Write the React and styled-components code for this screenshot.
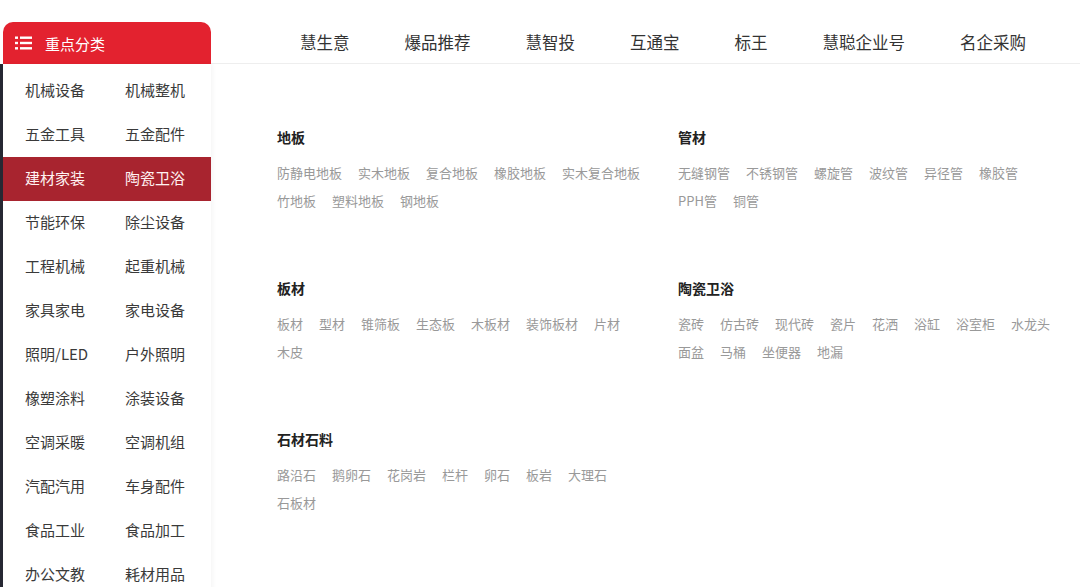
import React from "react";
import styled, { createGlobalStyle } from "styled-components";

const GlobalStyle = createGlobalStyle`
  body {
    margin: 0;
    background: #fff;
    font-family: "Noto Sans CJK SC", "Noto Sans", sans-serif;
  }
`;

const sideRows = [
  ["机械设备", "机械整机"],
  ["五金工具", "五金配件"],
  ["建材家装", "陶瓷卫浴"],
  ["节能环保", "除尘设备"],
  ["工程机械", "起重机械"],
  ["家具家电", "家电设备"],
  ["照明/LED", "户外照明"],
  ["橡塑涂料", "涂装设备"],
  ["空调采暖", "空调机组"],
  ["汽配汽用", "车身配件"],
  ["食品工业", "食品加工"],
  ["办公文教", "耗材用品"],
];

const navItems = ["慧生意", "爆品推荐", "慧智投", "互通宝", "标王", "慧聪企业号", "名企采购"];

const sections = [
  {
    title: "地板",
    items: ["防静电地板", "实木地板", "复合地板", "橡胶地板", "实木复合地板", "竹地板", "塑料地板", "钢地板"],
  },
  {
    title: "管材",
    items: ["无缝钢管", "不锈钢管", "螺旋管", "波纹管", "异径管", "橡胶管", "PPH管", "铜管"],
  },
  {
    title: "板材",
    items: ["板材", "型材", "锥筛板", "生态板", "木板材", "装饰板材", "片材", "木皮"],
  },
  {
    title: "陶瓷卫浴",
    items: ["瓷砖", "仿古砖", "现代砖", "瓷片", "花洒", "浴缸", "浴室柜", "水龙头", "面盆", "马桶", "坐便器", "地漏"],
  },
  {
    title: "石材石料",
    items: ["路沿石", "鹅卵石", "花岗岩", "栏杆", "卵石", "板岩", "大理石", "石板材"],
  },
];

const ListIcon = () => (
  <svg width="17" height="14" viewBox="0 0 17 14" fill="#fff">
    <rect x="0" y="0.5" width="3" height="2.4" />
    <rect x="5" y="0.5" width="12" height="2.4" />
    <rect x="0" y="5.8" width="3" height="2.4" />
    <rect x="5" y="5.8" width="12" height="2.4" />
    <rect x="0" y="11.1" width="3" height="2.4" />
    <rect x="5" y="11.1" width="12" height="2.4" />
  </svg>
);

const App = () => {
  return (
    <>
      <GlobalStyle />
      <Page>
        <Sidebar>
          <SideHeader>
            <ListIcon />
            <span>重点分类</span>
          </SideHeader>
          <SideList>
            {sideRows.map((row, i) => (
              <SideRow key={i} $active={i === 2}>
                {row.map((label) => (
                  <SideCell key={label}>{label}</SideCell>
                ))}
              </SideRow>
            ))}
          </SideList>
        </Sidebar>
        <Main>
          <Nav>
            {navItems.map((n) => (
              <NavItem key={n}>{n}</NavItem>
            ))}
          </Nav>
          <Content>
            {sections.map((s) => (
              <Section key={s.title}>
                <SectionTitle>{s.title}</SectionTitle>
                <Items>
                  {s.items.map((it) => (
                    <Item key={it}>{it}</Item>
                  ))}
                </Items>
              </Section>
            ))}
          </Content>
        </Main>
      </Page>
    </>
  );
};

export default App;

const Page = styled.div`
  display: flex;
  width: 1080px;
  height: 587px;
  overflow: hidden;
  background: #fff;
`;

const Sidebar = styled.div`
  flex: 0 0 211px;
  width: 211px;
  min-width: 0;
  padding-top: 22px;
  position: relative;
  z-index: 1;
`;

const SideHeader = styled.div`
  display: flex;
  align-items: center;
  gap: 13px;
  margin-left: 3px;
  height: 42px;
  padding-left: 12px;
  box-sizing: border-box;
  background: #e3222f;
  border-radius: 10px 10px 0 0;
  color: #fff;
  font-size: 15px;
`;

const SideList = styled.div`
  padding-top: 5px;
  border-left: 3px solid #262833;
  background: #fff;
  box-shadow: 2px 0 4px rgba(0, 0, 0, 0.04);
`;

const SideRow = styled.div`
  display: flex;
  align-items: center;
  height: 44px;
  padding: 0 0 3px 22px;
  box-sizing: border-box;
  background: ${(p) => (p.$active ? "#a8242f" : "transparent")};
  color: ${(p) => (p.$active ? "#fff2f2" : "#3a3a3a")};
`;

const SideCell = styled.div`
  font-size: 15px;
  white-space: nowrap;
  &:first-child {
    width: 100px;
  }
`;

const Main = styled.div`
  flex: 1;
  min-width: 0;
  display: flex;
  flex-direction: column;
`;

const Nav = styled.div`
  display: flex;
  align-items: center;
  gap: 55px;
  height: 64px;
  padding: 20px 0 0 89px;
  border-bottom: 1px solid #eeeeee;
  box-sizing: border-box;
  font-size: 16.5px;
  color: #333;
`;

const NavItem = styled.div`
  white-space: nowrap;
`;

const Content = styled.div`
  display: grid;
  grid-template-columns: 380px 380px;
  grid-auto-rows: 151px;
  column-gap: 21px;
  padding: 63px 0 0 66px;
`;

const Section = styled.div`
  display: flex;
  flex-direction: column;
`;

const SectionTitle = styled.div`
  font-size: 14px;
  font-weight: 700;
  line-height: 20px;
  color: #222;
  margin-bottom: 12px;
`;

const Items = styled.div`
  display: flex;
  flex-wrap: wrap;
  column-gap: 16px;
`;

const Item = styled.span`
  font-size: 13px;
  line-height: 28px;
  color: #999;
  white-space: nowrap;
`;
